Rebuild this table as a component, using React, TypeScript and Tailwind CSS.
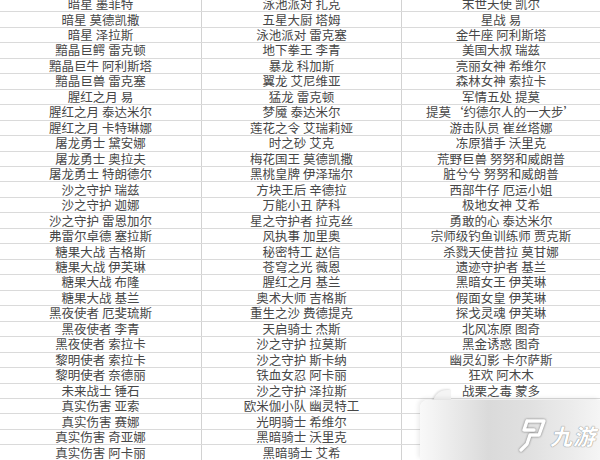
const col1 = [
  "暗星 墨菲特", "暗星 莫德凯撒", "暗星 泽拉斯", "黯晶巨鳄 雷克顿", "黯晶巨牛 阿利斯塔",
  "黯晶巨兽 雷克塞", "腥红之月 易", "腥红之月 泰达米尔", "腥红之月 卡特琳娜", "屠龙勇士 黛安娜",
  "屠龙勇士 奥拉夫", "屠龙勇士 特朗德尔", "沙之守护 瑞兹", "沙之守护 迦娜", "沙之守护 雷恩加尔",
  "弗雷尔卓德 塞拉斯", "糖果大战 吉格斯", "糖果大战 伊芙琳", "糖果大战 布隆", "糖果大战 基兰",
  "黑夜使者 厄斐琉斯", "黑夜使者 李青", "黑夜使者 索拉卡", "黎明使者 索拉卡", "黎明使者 奈德丽",
  "未来战士 锤石", "真实伤害 亚索", "真实伤害 赛娜", "真实伤害 奇亚娜", "真实伤害 阿卡丽",
];

const col2 = [
  "泳池派对 扎克", "五星大厨 塔姆", "泳池派对 雷克塞", "地下拳王 李青", "暴龙 科加斯",
  "翼龙 艾尼维亚", "猛龙 雷克顿", "梦魇 泰达米尔", "莲花之令 艾瑞莉娅", "时之砂 艾克",
  "梅花国王 莫德凯撒", "黑桃皇牌 伊泽瑞尔", "方块王后 辛德拉", "万能小丑 萨科", "星之守护者 拉克丝",
  "风执事 加里奥", "秘密特工 赵信", "苍穹之光 薇恩", "腥红之月 基兰", "奥术大师 吉格斯",
  "重生之沙 费德提克", "天启骑士 杰斯", "沙之守护 拉莫斯", "沙之守护 斯卡纳", "铁血女忍 阿卡丽",
  "沙之守护 泽拉斯", "欧米伽小队 幽灵特工", "光明骑士 希维尔", "黑暗骑士 沃里克", "黑暗骑士 艾希",
];

const col3 = [
  "末世天使 凯尔", "星战 易", "金牛座 阿利斯塔", "美国大叔 瑞兹", "亮丽女神 希维尔",
  "森林女神 索拉卡", "军情五处 提莫", "提莫‘约德尔人的一大步’", "游击队员 崔丝塔娜", "冻原猎手 沃里克",
  "荒野巨兽 努努和威朗普", "脏兮兮 努努和威朗普", "西部牛仔 厄运小姐", "极地女神 艾希", "勇敢的心 泰达米尔",
  "宗师级钓鱼训练师 贾克斯", "杀戮天使昔拉 莫甘娜", "遗迹守护者 基兰", "黑暗女王 伊芙琳", "假面女皇 伊芙琳",
  "探戈灵魂 伊芙琳", "北风冻原 图奇", "黑金诱惑 图奇", "幽灵幻影 卡尔萨斯", "狂欢 阿木木",
  "战栗之毒 蒙多", "", "", "", "",
];

// 九游 watermark in the bottom right corner
const Watermark = () => (
  <>
    <div className="absolute left-[433px] top-[390px] h-[14px] w-[18px] rounded-tl-[14px] bg-[#f4f4f4] shadow-[-1px_-1px_2px_rgba(0,0,0,0.12)]" />
    <div className="absolute left-[420px] top-[400px] flex h-[60px] w-[180px] items-center justify-end gap-[3px] rounded-tl-[8px] bg-[linear-gradient(90deg,#f9f9f9_0%,#ededed_15%,#dadada_38%,#e0e0e0_60%,#ececec_85%,#f5f5f5_100%)] pr-[4px] pt-[10px] shadow-[-2px_-2px_4px_rgba(0,0,0,0.08)]">
      <svg width="30" height="34" viewBox="0 0 30 34" className="drop-shadow-[0_0_1px_rgba(0,0,0,0.5)]">
        <path
          d="M10 3 L27 3 L22 17 L13 17 L10 26 L4 32 M10 3 L7 12 L17 12"
          fill="none"
          stroke="#ffffff"
          strokeWidth="3.4"
          strokeLinejoin="round"
          strokeLinecap="round"
        />
      </svg>
      <span className="text-[22px] font-bold italic leading-none tracking-[1px] text-white [font-family:'Noto_Sans_CJK_SC',sans-serif] [text-shadow:0_0_1px_#888,0_0_1px_#888]">
        九游
      </span>
    </div>
  </>
);

const App = () => {
  return (
    <div className="relative h-[460px] w-[600px] overflow-hidden bg-white text-[12.5px] leading-[14px] text-[#474747] [font-family:'Noto_Sans_CJK_SC','Noto_Sans',sans-serif]">
      <div className="-mt-[3.2px]">
        {col1.map((name, i) => (
          <div key={i} className="grid h-[15.48px] grid-cols-[202px_200px_1fr] border-b border-[#dadada]">
            <div className="flex items-center justify-center border-r border-[#d2d2d2] whitespace-nowrap">{name}</div>
            <div className="flex items-center justify-center border-r border-[#d2d2d2] whitespace-nowrap">{col2[i]}</div>
            <div className="flex items-center justify-center whitespace-nowrap">{col3[i]}</div>
          </div>
        ))}
      </div>
      <Watermark />
    </div>
  );
};

export default App;
